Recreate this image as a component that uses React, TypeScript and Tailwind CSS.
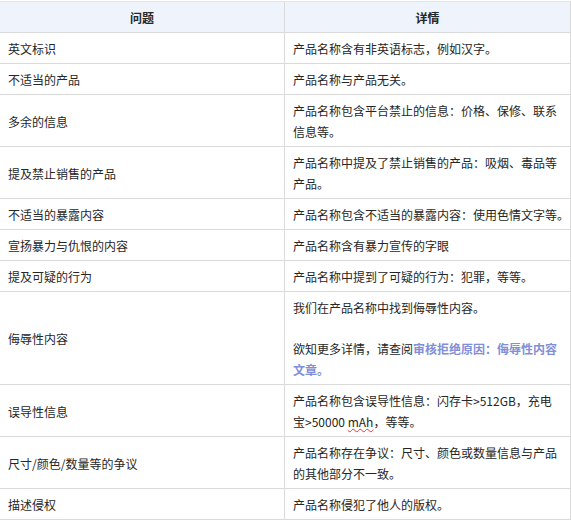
import React from 'react';

type Row = { issue: string; detail: React.ReactNode };

const rows: Row[] = [
  { issue: '英文标识', detail: '产品名称含有非英语标志，例如汉字。' },
  { issue: '不适当的产品', detail: '产品名称与产品无关。' },
  { issue: '多余的信息', detail: '产品名称包含平台禁止的信息：价格、保修、联系信息等。' },
  { issue: '提及禁止销售的产品', detail: '产品名称中提及了禁止销售的产品：吸烟、毒品等产品。' },
  {
    issue: '不适当的暴露内容',
    detail: <span className="whitespace-nowrap">产品名称包含不适当的暴露内容：使用色情文字等。</span>,
  },
  { issue: '宣扬暴力与仇恨的内容', detail: '产品名称含有暴力宣传的字眼' },
  { issue: '提及可疑的行为', detail: '产品名称中提到了可疑的行为：犯罪，等等。' },
  {
    issue: '侮辱性内容',
    detail: (
      <>
        <p>我们在产品名称中找到侮辱性内容。</p>
        <p className="mt-[20px]">
          欲知更多详情，请查阅
          <a className="font-bold text-[#7f8fd8]">审核拒绝原因：侮辱性内容文章。</a>
        </p>
      </>
    ),
  },
  {
    issue: '误导性信息',
    detail: (
      <>
        产品名称包含误导性信息：闪存卡&gt;512GB，充电宝&gt;50000{' '}
        <span className="underline decoration-wavy decoration-red-500 decoration-1">mAh</span>，等等。
      </>
    ),
  },
  { issue: '尺寸/颜色/数量等的争议', detail: '产品名称存在争议：尺寸、颜色或数量信息与产品的其他部分不一致。' },
  { issue: '描述侵权', detail: '产品名称侵犯了他人的版权。' },
];

export default function App() {
  return (
    <div
      className="w-[571px] h-[521px] bg-white pt-[1px] text-[12px] leading-[21px] text-[#262626]"
      style={{ fontFamily: '"Noto Sans CJK SC", "Liberation Sans", sans-serif' }}
    >
      <div className="grid grid-cols-[285px_286px] border-t border-[#e4e4e4]">
        <div className="bg-[#eef3fc] border-b border-r border-[#dadada] h-[31px] flex items-center justify-center font-bold">
          问题
        </div>
        <div className="bg-[#eef3fc] border-b border-r border-[#dadada] h-[31px] flex items-center justify-center font-bold">
          详情
        </div>
        {rows.map((r) => (
          <React.Fragment key={r.issue}>
            <div className="border-b border-r border-[#dadada] pl-[8px] pr-2 pt-[5px] pb-[4px] flex items-center">
              {r.issue}
            </div>
            <div className="border-b border-r border-[#dadada] pl-[8px] pr-[8px] pt-[5px] pb-[4px]">
              {r.detail}
            </div>
          </React.Fragment>
        ))}
      </div>
    </div>
  );
}
